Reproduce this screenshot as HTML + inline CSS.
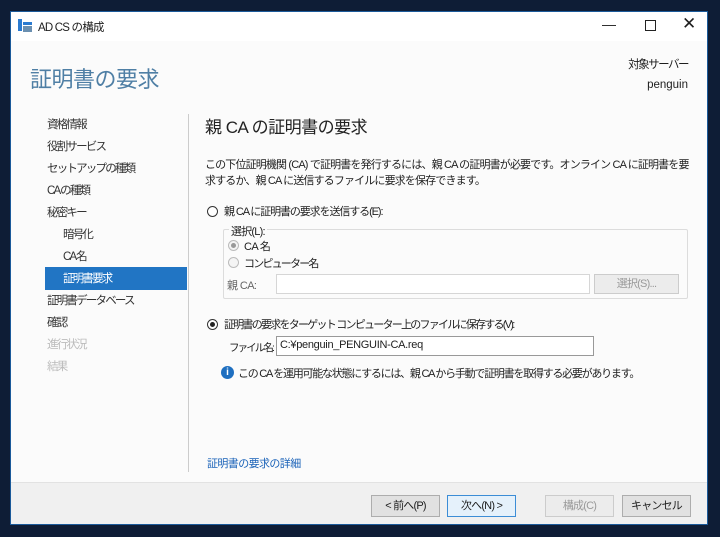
<!DOCTYPE html>
<html><head><meta charset="utf-8"><style>
*{margin:0;padding:0;box-sizing:border-box}
body{width:720px;height:537px;background:#0e1d36;font-family:"Liberation Sans","Noto Sans CJK JP",sans-serif;font-size:11px;color:#1e1e1e;position:relative;overflow:hidden}
.win{position:absolute;left:10px;top:11px;width:698px;height:514px;background:#fff;border:1px solid #1b5a9a;letter-spacing:-1.3px}
.a{position:absolute;white-space:nowrap}
.nav{left:36px;color:#333;font-size:11.5px;letter-spacing:-1.8px}
.radio{position:absolute;width:11px;height:11px;border:1px solid #333;border-radius:50%;background:#fff}
.radio.on::after{content:"";position:absolute;left:2px;top:2px;width:5px;height:5px;border-radius:50%;background:#222}
.radio.dis{border-color:#bbb;background:#f4f4f4}
.radio.dis.on::after{background:#999}
.btn{position:absolute;top:483px;width:69px;height:22px;border:1px solid #adadad;background:#e1e1e1;text-align:center;line-height:20px;font-size:11px;letter-spacing:-0.8px}
</style></head><body>
<div class="win">
  <svg class="a" style="left:7px;top:7px" width="14" height="14"><rect x="0" y="0" width="4" height="12" fill="#2b7bd0"/><rect x="5" y="3" width="9" height="3" fill="#2b7bd0"/><rect x="5" y="7" width="9" height="6" fill="#6a8fb0"/></svg>
  <div class="a" style="left:27px;top:7px;font-size:11.5px;letter-spacing:-0.8px">AD CS の構成</div>
  <div class="a" style="left:591px;top:4px;font-size:14px;letter-spacing:0">&#8212;</div>
  <div class="a" style="left:634px;top:8px;width:11px;height:11px;border:1px solid #222"></div>
  <div class="a" style="left:671px;top:2px;font-size:17px;font-weight:300;letter-spacing:0">&#10005;</div>
  <div class="a" style="left:0;top:29px;width:696px;height:441px;background:#fbfbfb"></div>
  <div class="a" style="left:19px;top:50px;font-size:22px;color:#4f7fa5;letter-spacing:-0.5px">証明書の要求</div>
  <div class="a" style="right:19px;top:43px;font-size:11.5px;text-align:right;line-height:20px;letter-spacing:-1.5px">対象サーバー<br><span style="letter-spacing:0">penguin</span></div>
  <div class="a nav" style="top:104px">資格情報</div>
  <div class="a nav" style="top:126px">役割サービス</div>
  <div class="a nav" style="top:148px">セットアップの種類</div>
  <div class="a nav" style="top:170px">CA の種類</div>
  <div class="a nav" style="top:192px">秘密キー</div>
  <div class="a nav" style="top:214px;left:52px">暗号化</div>
  <div class="a nav" style="top:236px;left:52px">CA 名</div>
  <div class="a" style="left:34px;top:255px;width:142px;height:23px;background:#2175c4"></div>
  <div class="a nav" style="top:258px;left:52px;color:#fff">証明書要求</div>
  <div class="a nav" style="top:280px">証明書データベース</div>
  <div class="a nav" style="top:302px">確認</div>
  <div class="a nav" style="top:324px;color:#bbb">進行状況</div>
  <div class="a nav" style="top:346px;color:#bbb">結果</div>
  <div class="a" style="left:177px;top:102px;width:1px;height:358px;background:#ccc"></div>
  <div class="a" style="left:194px;top:101px;font-size:17px;color:#222;letter-spacing:-0.5px">親 CA の証明書の要求</div>
  <div class="a" style="left:194px;top:145px;line-height:16px;font-size:11px;letter-spacing:-0.85px">この下位証明機関 (CA) で証明書を発行するには、親 CA の証明書が必要です。オンライン CA に証明書を要<br>求するか、親 CA に送信するファイルに要求を保存できます。</div>
  <div class="radio" style="left:196px;top:194px"></div>
  <div class="a" style="left:213px;top:191px;letter-spacing:-1.1px">親 CA に証明書の要求を送信する(E):</div>
  <div class="a" style="left:212px;top:217px;width:465px;height:70px;border:1px solid #dcdcdc;border-radius:2px"></div>
  <div class="a" style="left:218px;top:211px;background:#fbfbfb;padding:0 2px;letter-spacing:-0.8px">選択(L):</div>
  <div class="radio dis on" style="left:217px;top:228px"></div>
  <div class="a" style="left:233px;top:226px;letter-spacing:-0.6px">CA 名</div>
  <div class="radio dis" style="left:217px;top:245px"></div>
  <div class="a" style="left:233px;top:243px;letter-spacing:-1.8px">コンピューター名</div>
  <div class="a" style="left:216px;top:265px;color:#666;letter-spacing:-0.6px">親 CA:</div>
  <div class="a" style="left:265px;top:262px;width:314px;height:20px;border:1px solid #d6d6d6;background:#fff"></div>
  <div class="a" style="left:583px;top:262px;width:85px;height:20px;border:1px solid #ccc;background:#ececec;color:#999;text-align:center;line-height:18px;letter-spacing:-0.8px">選択(S)...</div>
  <div class="radio on" style="left:196px;top:307px"></div>
  <div class="a" style="left:213px;top:304px;letter-spacing:-1.75px">証明書の要求をターゲット コンピューター上のファイルに保存する(V):</div>
  <div class="a" style="left:218px;top:328px;font-size:10.5px;letter-spacing:-1.9px">ファイル名:</div>
  <div class="a" style="left:265px;top:324px;width:318px;height:20px;border:1px solid #999;background:#fff;padding:2px 3px;font-size:11px;letter-spacing:-0.3px">C:¥penguin_PENGUIN-CA.req</div>
  <div class="a" style="left:210px;top:354px;width:13px;height:13px;border-radius:50%;background:#1e6fc0;color:#fff;font-size:10px;font-weight:bold;text-align:center;line-height:13px;letter-spacing:0">i</div>
  <div class="a" style="left:227px;top:353px;letter-spacing:-1.25px">この CA を運用可能な状態にするには、親 CA から手動で証明書を取得する必要があります。</div>
  <div class="a" style="left:196px;top:443px;color:#1a62b8;letter-spacing:-0.6px">証明書の要求の詳細</div>
  <div class="a" style="left:0;top:470px;width:696px;height:42px;background:#f0f0f0;border-top:1px solid #e2e2e2"></div>
  <div class="btn" style="left:360px">&lt; 前へ(P)</div>
  <div class="btn" style="left:436px;border-color:#3c8dd6;background:#e5f1fb">次へ(N) &gt;</div>
  <div class="btn" style="left:534px;border-color:#ccc;background:#ececec;color:#999">構成(C)</div>
  <div class="btn" style="left:611px">キャンセル</div>
</div>
</body></html>
